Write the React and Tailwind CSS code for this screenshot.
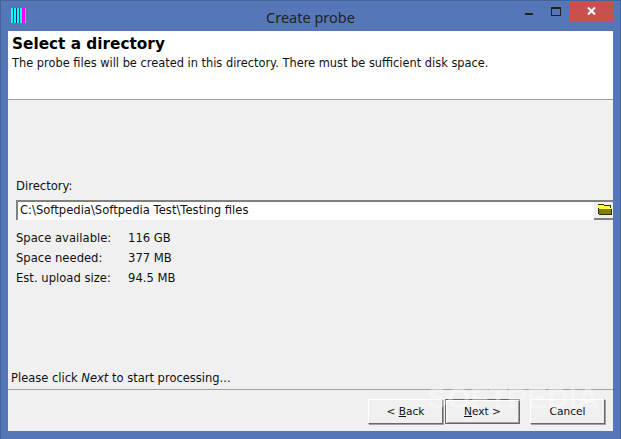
function FolderIcon() {
  return (
    <svg width="15" height="12" viewBox="0 0 15 12" className="mt-[1px] ml-[1px]" shapeRendering="crispEdges">
      <path d="M1 1h5l1 1h6v3l1 1v5H2z" fill="#808000" stroke="#2e2e00" strokeWidth="1" />
      <path d="M1 5V2h5l1 1h6v2l1 1H2z" fill="#ffff33" />
    </svg>
  );
}

function WizardButton({ children, isDefault }) {
  return (
    <button
      className={`w-[75px] h-[25px] flex items-center justify-center bg-[#f0f0f0] border text-[10.6px] text-[#111] ${
        isDefault
          ? 'border-[#666666] shadow-[inset_1px_1px_0_#ffffff,inset_-1px_-1px_0_#a0a0a0]'
          : 'border-t-white border-l-white border-r-[#696969] border-b-[#696969] shadow-[1px_1px_0_#a0a0a0]'
      }`}
    >
      <span className="whitespace-pre">{children}</span>
    </button>
  );
}

function InfoRow({ label, value }) {
  return (
    <div className="flex h-[20px] items-center">
      <span className="w-[112px]">{label}</span>
      <span>{value}</span>
    </div>
  );
}

export default function App() {
  return (
    <div
      className="w-[621px] h-[439px] bg-[#5577b8] border-t border-x border-[#47619a] flex flex-col overflow-hidden text-[11.6px] text-[#111]"
      style={{ fontFamily: '"DejaVu Sans", sans-serif' }}
    >
      {/* Title bar */}
      <div className="h-[30px] shrink-0 grid grid-cols-[1fr_auto_1fr]">
        <div className="flex ml-[10px] mt-[7px] h-[15px] w-[15px] bg-[#00ffff] gap-[2px] pl-[2px]">
          <span className="w-px h-full bg-[#203070]" />
          <span className="w-px h-full bg-[#203070]" />
          <span className="w-px h-full bg-[#203070]" />
          <span className="w-[3px] h-full bg-[#ff00ff]" />
        </div>
        <div
          className="text-center text-[14.5px] leading-[32px] text-[#222]"
          style={{ fontFamily: '"Noto Sans", sans-serif' }}
        >
          Create probe
        </div>
        <div className="flex items-start justify-end mr-[6px]">
          <span className="mt-[12px] w-[8px] h-[2px] bg-[#222]" />
          <span className="ml-[18px] mt-[6px] w-[10px] h-[9px] border border-t-2 border-[#222]" />
          <div className="ml-[8px] w-[45px] h-[20px] bg-[#c75050] flex items-center justify-center">
            <svg width="9" height="8" viewBox="0 0 9 8">
              <path d="M1 0.5l7 7M8 0.5l-7 7" stroke="#fff" strokeWidth="2" />
            </svg>
          </div>
        </div>
      </div>

      {/* Client area */}
      <div className="mx-[7px] h-[400px] bg-[#f0f0f0] flex flex-col relative">
        <div className="h-[69px] bg-white border-b border-[#a0a0a0] pl-[4px] pt-[4px] shrink-0">
          <h1 className="font-bold text-[15.3px] leading-[19px] text-black">Select a directory</h1>
          <p className="text-[11.4px] leading-[15px] mt-[2px]">
            The probe files will be created in this directory. There must be sufficient disk space.
          </p>
        </div>

        <div className="flex-1 flex flex-col pl-[8px] pt-[79px]">
          <div className="leading-[14px]">Directory:</div>
          <div className="mt-[7px] flex h-[20px] border-t-2 border-[#808080]">
            <div className="flex-1 bg-white border-l-2 border-[#808080] pl-[2px] leading-[17px]">
              C:\Softpedia\Softpedia Test\Testing files
            </div>
            <div className="w-[19px] flex justify-center border-b-2 border-[#808080] bg-[#f0f0f0]">
              <FolderIcon />
            </div>
          </div>
          <div className="mt-[9px]">
            <InfoRow label="Space available:" value="116 GB" />
            <InfoRow label="Space needed:" value="377 MB" />
            <InfoRow label="Est. upload size:" value="94.5 MB" />
          </div>
        </div>

        <div className="pl-[3px] text-[11.5px] leading-[15px] pb-[3px]">
          Please click <em>Next</em> to start processing...
        </div>
        <div className="h-[42px] shrink-0 border-t border-[#a0a0a0] flex items-start pt-[9px] pl-[360px]">
          <WizardButton>&lt; <u>B</u>ack</WizardButton>
          <span className="w-[2px]" />
          <WizardButton isDefault><u>N</u>ext &gt;</WizardButton>
          <span className="w-[10px]" />
          <WizardButton>Cancel</WizardButton>
        </div>

        {/* Watermark */}
        <span
          className="absolute left-[419px] top-[352px] text-[30px] leading-[30px] font-bold text-white/40 pointer-events-none"
          style={{ fontFamily: '"Liberation Sans", sans-serif' }}
        >
          SOFTPEDIA
        </span>
      </div>
    </div>
  );
}
